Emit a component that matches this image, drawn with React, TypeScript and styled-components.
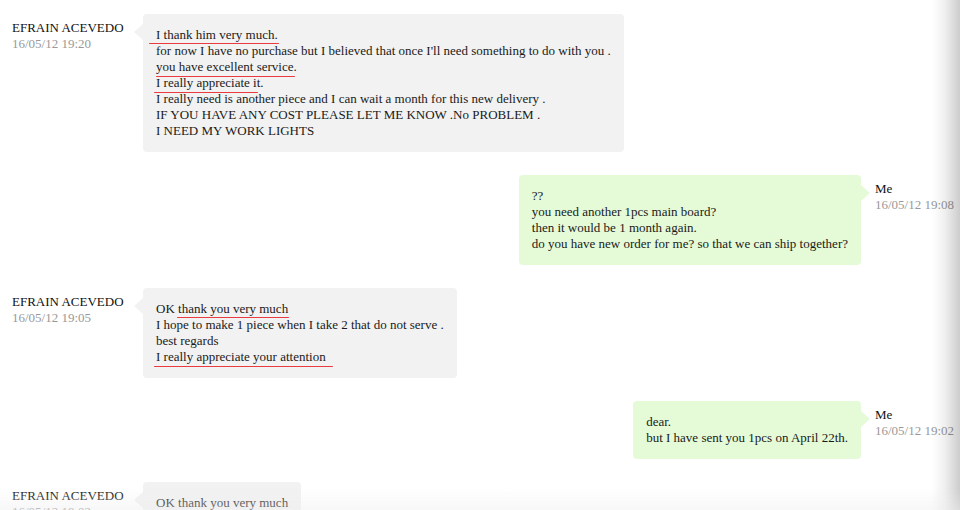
import React from "react";
import styled, { createGlobalStyle, css } from "styled-components";

const Global = createGlobalStyle`
  html, body {
    margin: 0;
    padding: 0;
    overflow: hidden;
    background: #ffffff;
  }
  body {
    font-family: "Liberation Serif", "Times New Roman", serif;
    font-size: 13px;
    color: #1a1a1a;
  }
`;

const Thread = styled.div`
  display: flex;
  flex-direction: column;
  gap: 23px;
  padding: 14px 5px 0 12px;
  width: 943px;
`;

const Row = styled.div<{ $mine?: boolean }>`
  display: flex;
  align-items: flex-start;
  flex-direction: ${(p) => (p.$mine ? "row-reverse" : "row")};
  justify-content: flex-start;
`;

const Meta = styled.div<{ $mine?: boolean }>`
  flex: none;
  width: ${(p) => (p.$mine ? "80px" : "131px")};
  margin-left: ${(p) => (p.$mine ? "14px" : "0")};
  padding-top: 6px;
  line-height: 16px;
`;

const Name = styled.div`
  color: #111;
  white-space: nowrap;
`;

const Stamp = styled.div`
  color: #999;
  white-space: nowrap;
`;

const Bubble = styled.div<{ $mine?: boolean }>`
  position: relative;
  flex: none;
  box-sizing: border-box;
  padding: 13px 13px 13px 13px;
  line-height: 16px;
  border-radius: 4px;
  background: ${(p) => (p.$mine ? "#e5fbd8" : "#f2f2f2")};
  color: #1a1a1a;
  white-space: pre;

  &::before {
    content: "";
    position: absolute;
    top: 10px;
    width: 0;
    height: 0;
    border-top: 8px solid transparent;
    border-bottom: 8px solid transparent;
    ${(p) =>
      p.$mine
        ? css`
            right: -9px;
            border-left: 9px solid #e5fbd8;
          `
        : css`
            left: -9px;
            border-right: 9px solid #f2f2f2;
          `}
  }
`;

const Line = styled.div``;

const Scribble = styled.span<{ $l?: number; $r?: number; $y?: number }>`
  position: relative;

  &::after {
    content: "";
    position: absolute;
    left: ${(p) => -(p.$l ?? 0)}px;
    right: ${(p) => -(p.$r ?? 0)}px;
    bottom: ${(p) => -(p.$y ?? 2)}px;
    height: 1.5px;
    border-radius: 1px;
    background: #ea3b41;
  }
`;

const EdgeShade = styled.div`
  position: fixed;
  top: 0;
  right: 0;
  width: 28px;
  height: 100%;
  pointer-events: none;
  background: linear-gradient(
    to right,
    rgba(0, 0, 0, 0) 0%,
    rgba(0, 0, 0, 0.06) 45%,
    rgba(0, 0, 0, 0.2) 100%
  );
`;

const BottomShade = styled.div`
  position: fixed;
  left: 0;
  bottom: 0;
  width: 100%;
  height: 22px;
  pointer-events: none;
  background: linear-gradient(
    to bottom,
    rgba(255, 255, 255, 0) 0%,
    rgba(238, 238, 238, 0.45) 100%
  );
`;

type Msg = {
  mine: boolean;
  name: string;
  time: string;
  lines: React.ReactNode[];
};

const messages: Msg[] = [
  {
    mine: false,
    name: "EFRAIN ACEVEDO",
    time: "16/05/12 19:20",
    lines: [
      <Scribble $l={7} $r={1} $y={2}>I thank him very much.</Scribble>,
      "for now I have no purchase but I believed that once I'll need something to do with you .",
      <>
        <Scribble $l={0} $r={1} $y={3}>you have excellent service</Scribble>.
      </>,
      <>
        <Scribble $l={2} $r={-2} $y={3}>I really appreciate it</Scribble>.
      </>,
      "I really need is another piece and I can wait a month for this new delivery .",
      "IF YOU HAVE ANY COST PLEASE LET ME KNOW .No PROBLEM .",
      "I NEED MY WORK LIGHTS",
    ],
  },
  {
    mine: true,
    name: "Me",
    time: "16/05/12 19:08",
    lines: [
      "??",
      "you need another 1pcs main board?",
      "then it would be 1 month again.",
      "do you have new order for me? so that we can ship together?",
    ],
  },
  {
    mine: false,
    name: "EFRAIN ACEVEDO",
    time: "16/05/12 19:05",
    lines: [
      <>
        OK <Scribble $l={1} $r={1} $y={2}>thank you very much</Scribble>
      </>,
      "I hope to make 1 piece when I take 2 that do not serve .",
      "best regards",
      <Scribble $l={2} $r={7} $y={3}>I really appreciate your attention</Scribble>,
    ],
  },
  {
    mine: true,
    name: "Me",
    time: "16/05/12 19:02",
    lines: ["dear.", "but I have sent you 1pcs on April 22th."],
  },
  {
    mine: false,
    name: "EFRAIN ACEVEDO",
    time: "16/05/12 19:02",
    lines: ["OK thank you very much"],
  },
];

export default function App() {
  return (
    <>
      <Global />
      <Thread>
        {messages.map((m, i) => (
          <Row key={i} $mine={m.mine}>
            <Meta $mine={m.mine}>
              <Name>{m.name}</Name>
              <Stamp>{m.time}</Stamp>
            </Meta>
            <Bubble $mine={m.mine}>
              {m.lines.map((l, j) => (
                <Line key={j}>{l}</Line>
              ))}
            </Bubble>
          </Row>
        ))}
      </Thread>
      <EdgeShade />
      <BottomShade />
    </>
  );
}
